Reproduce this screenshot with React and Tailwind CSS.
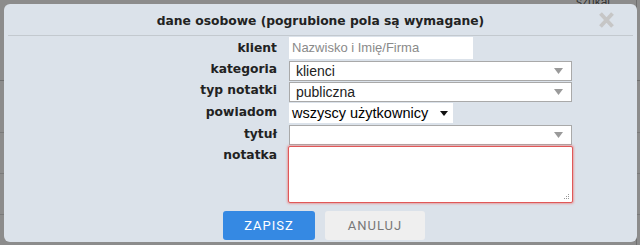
import React from "react";

const tahoma = { fontFamily: '"DejaVu Sans", Verdana, sans-serif' };

function GrayArrow() {
  return (
    <svg width="9" height="6" viewBox="0 0 9 6" className="shrink-0">
      <path d="M0 0 L9 0 L4.5 6 Z" fill="#9a9a9a" />
    </svg>
  );
}

function SelectBox({ value }) {
  return (
    <div className="flex h-[20px] w-[283px] items-center justify-between border border-[#a9a9a9] bg-white pl-[6px] pr-[8px]">
      <span className="text-[14px] leading-none text-[#222]" style={{ fontFamily: '"Liberation Sans", Arial, sans-serif' }}>{value}</span>
      <GrayArrow />
    </div>
  );
}

export default function App() {
  return (
    <div className="relative h-[245px] w-[640px] overflow-hidden bg-[#8c8c8c]" style={{ fontFamily: '"Liberation Sans", Arial, sans-serif' }}>
      {/* dimmed page behind */}
      <div className="flex h-full flex-col pt-[80px]">
        <div className="h-px w-full bg-[#6f6f6f]" />
        <div className="h-[51px]" />
        <div className="h-px w-full bg-[#7a7a7a]" />
        <div className="h-[40px]" />
        <div className="h-px w-full bg-[#7a7a7a]" />
        <div className="h-[40px]" />
        <div className="h-px w-full bg-[#7a7a7a]" />
      </div>
      <div className="absolute right-[30px] top-[-5px] text-[12px] leading-[14px] text-[#333]">szukaj</div>
      <div className="absolute right-[3px] top-0 h-[245px] w-px bg-[#6f6f6f]" />

      {/* dialog */}
      <div className="absolute left-[4px] top-[4px] h-[238px] w-[633px] rounded-[6px] bg-[#dbe2ea]">
        <div className="relative flex h-[31px] items-center justify-center">
          <span className="pt-[3px] text-[12.3px] font-bold text-[#222]" style={tahoma}>
            dane osobowe (pogrubione pola są wymagane)
          </span>
          <svg className="absolute right-[23px] top-[8px]" width="15" height="16" viewBox="0 0 15 16">
            <path d="M1.5 1.5 L13.5 14.5 M13.5 1.5 L1.5 14.5" stroke="#c6c6c6" strokeWidth="3.8" strokeLinecap="butt" />
          </svg>
        </div>
        <div className="mx-[4px] h-px bg-[#c3c9cf]" />

        <div className="grid grid-cols-[285px_1fr] text-[12.3px]">
          {/* klient */}
          <div className="pr-[12px] pt-[3px] text-right font-bold text-[#222]" style={tahoma}>klient</div>
          <div className="pt-[1px]">
            <div className="flex h-[22px] w-[184px] items-center bg-white pl-[3px] text-[#8a8a8a]">
              <span className="text-[13px]" style={{ fontFamily: '"Liberation Sans", Arial, sans-serif' }}>Nazwisko i Imię/Firma</span>
            </div>
          </div>

          {/* kategoria */}
          <div className="pr-[12px] pt-[1px] text-right font-bold text-[#222]" style={tahoma}>kategoria</div>
          <div className="pt-[2px]">
            <SelectBox value="klienci" />
          </div>

          {/* typ notatki */}
          <div className="pr-[12px] text-right font-bold leading-[18px] text-[#222]" style={tahoma}>typ notatki</div>
          <div className="pt-[1px]">
            <SelectBox value="publiczna" />
          </div>

          {/* powiadom */}
          <div className="pr-[12px] pt-[1px] text-right font-bold leading-[18px] text-[#222]" style={tahoma}>powiadom</div>
          <div className="pt-[1px]">
            <div className="flex h-[20px] w-[164px] items-center justify-between bg-white pl-[3px] pr-[5px]">
              <span className="text-[14.5px] leading-none text-black">wszyscy użytkownicy</span>
              <svg width="8" height="5" viewBox="0 0 8 5"><path d="M0 0 L8 0 L4 5 Z" fill="#111" /></svg>
            </div>
          </div>

          {/* tytul */}
          <div className="pr-[12px] pt-[2px] text-right font-bold leading-[18px] text-[#222]" style={tahoma}>tytuł</div>
          <div className="pt-[2px]">
            <div className="flex h-[20px] w-[283px] items-center justify-end border border-[#a9a9a9] bg-white pr-[8px]">
              <GrayArrow />
            </div>
          </div>

          {/* notatka */}
          <div className="pr-[12px] pt-[1px] text-right font-bold leading-[18px] text-[#222]" style={tahoma}>notatka</div>
          <div className="pt-[1px]">
            <div className="relative -ml-[1px] h-[57px] w-[285px] rounded-[2px] border border-[#e05858] bg-white shadow-[0_0_2px_1px_rgba(235,110,110,0.55)]">
              <svg className="absolute bottom-[2px] right-[2px]" width="7" height="7" viewBox="0 0 7 7">
                <rect x="5" y="1" width="1" height="1" fill="#999" />
                <rect x="3" y="3" width="1" height="1" fill="#999" />
                <rect x="5" y="3" width="1" height="1" fill="#999" />
                <rect x="1" y="5" width="1" height="1" fill="#999" />
                <rect x="3" y="5" width="1" height="1" fill="#999" />
                <rect x="5" y="5" width="1" height="1" fill="#999" />
              </svg>
            </div>
          </div>
        </div>

        <div className="mt-[8px] flex justify-center gap-[10px] pl-[7px]">
          <button className="h-[29px] w-[92px] rounded-[3px] bg-[#3589e3] text-[13px] tracking-[1px] text-white" style={{ fontFamily: 'Roboto, "Liberation Sans", sans-serif' }}>ZAPISZ</button>
          <button className="h-[29px] w-[100px] rounded-[3px] bg-[#efefef] text-[13px] tracking-[1px] text-[#777]" style={{ fontFamily: 'Roboto, "Liberation Sans", sans-serif' }}>ANULUJ</button>
        </div>
      </div>
    </div>
  );
}
